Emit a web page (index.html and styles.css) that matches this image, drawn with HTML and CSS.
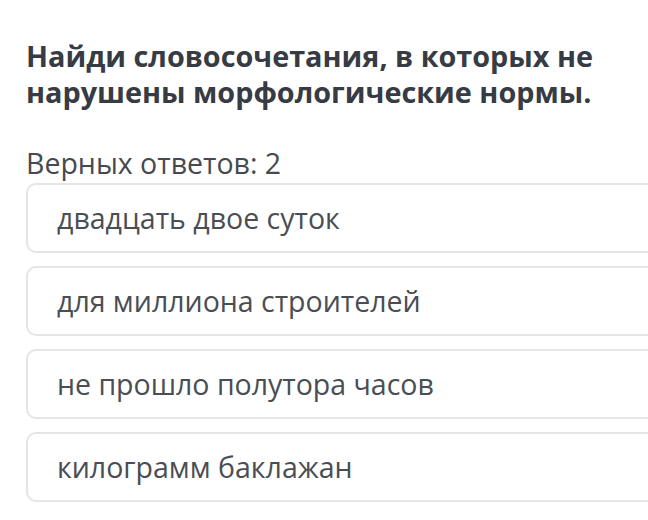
FILE: index.html
```html
<!DOCTYPE html>
<html lang="ru">
<head>
<meta charset="utf-8">
<link rel="stylesheet" href="styles.css">
</head>
<body>
<main class="question">
  <h1 class="title">Найди словосочетания, в которых не нарушены морфологические нормы.</h1>
  <p class="hint">Верных ответов: 2</p>
  <ul class="options">
    <li class="option">двадцать двое суток</li>
    <li class="option">для миллиона строителей</li>
    <li class="option">не прошло полутора часов</li>
    <li class="option">килограмм баклажан</li>
  </ul>
</main>
</body>
</html>
```
FILE: styles.css
```css
html, body {
  margin: 0;
  padding: 0;
  background: #ffffff;
  overflow: hidden;
}
body {
  width: 648px;
  height: 520px;
  font-family: "Open Sans", "Noto Sans", sans-serif;
}
.question {
  box-sizing: border-box;
  width: 648px;
  padding: 38px 0 0 26px;
  overflow: hidden;
}
.title {
  margin: 0;
  width: 610px;
  font-size: 28.8px;
  font-weight: 700;
  line-height: 36px;
  color: #363b44;
}
.hint {
  margin: 36px 0 0 0;
  font-size: 28.5px;
  line-height: 34px;
  color: #464a50;
}
.options {
  list-style: none;
  margin: 3px 0 0 0;
  padding: 0;
  display: flex;
  flex-direction: column;
  gap: 13px;
  overflow: hidden;
}
.option {
  box-sizing: border-box;
  width: calc(100% + 20px);
  height: 70px;
  border: 2px solid #e4e5e6;
  border-radius: 10px;
  padding: 0 0 0 29px;
  display: flex;
  align-items: center;
  font-size: 28.5px;
  color: #4a4e54;
}
```
